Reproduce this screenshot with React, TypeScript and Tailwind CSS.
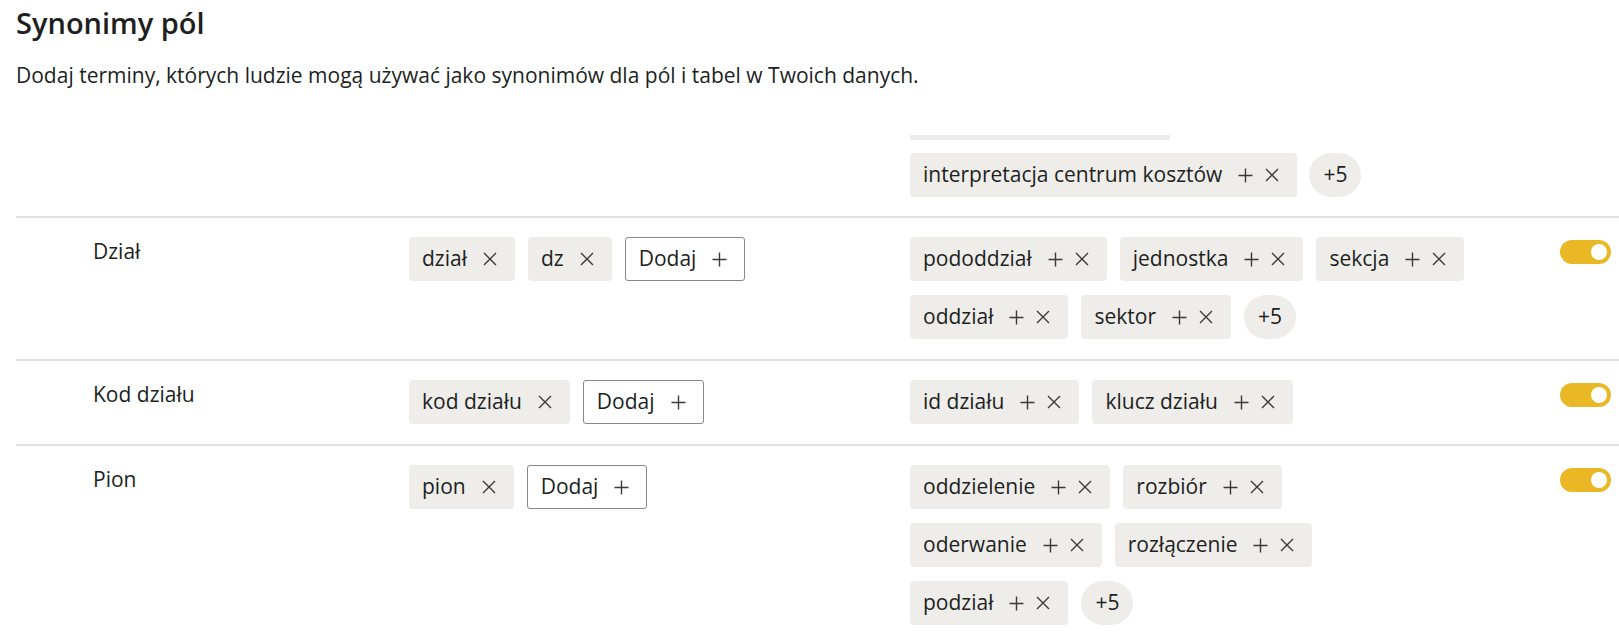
import React from "react";

const FONT = { fontFamily: '"Open Sans", "Noto Sans", sans-serif' };

function XIcon() {
  return (
    <svg width="14" height="14" viewBox="0 0 14 14" className="shrink-0">
      <path d="M1 1 L13 13 M13 1 L1 13" stroke="#3b3a39" strokeWidth="1.4" fill="none" />
    </svg>
  );
}

function PlusIcon() {
  return (
    <svg width="15" height="15" viewBox="0 0 15 15" className="shrink-0">
      <path d="M7.5 0.5 L7.5 14.5 M0.5 7.5 L14.5 7.5" stroke="#3b3a39" strokeWidth="1.4" fill="none" />
    </svg>
  );
}

function Chip({ label, plus = false }: { label: string; plus?: boolean }) {
  return (
    <div className="flex h-[44px] shrink-0 items-center gap-[16px] rounded-[4px] bg-[#efedea] pl-[13px] pr-[18px] text-[21px] text-[#201f1e]">
      <span className="whitespace-nowrap">{label}</span>
      <div className="flex items-center gap-[12px]">
        {plus && <PlusIcon />}
        <XIcon />
      </div>
    </div>
  );
}

function More() {
  return (
    <div className="flex h-[44px] w-[52px] shrink-0 items-center justify-center rounded-full bg-[#efedea] text-[21px] text-[#201f1e]">
      +5
    </div>
  );
}

function AddButton() {
  return (
    <div className="flex h-[44px] shrink-0 items-center gap-[16px] rounded-[3px] border border-[#8a8886] bg-white pl-[13px] pr-[17px] text-[21px] text-[#201f1e]">
      <span>Dodaj</span>
      <PlusIcon />
    </div>
  );
}

function Toggle() {
  return (
    <div className="mt-[3px] flex h-[24px] w-[51px] items-center justify-end rounded-full bg-[#e9b824] pr-[4px]">
      <div className="h-[16px] w-[16px] rounded-full bg-white" />
    </div>
  );
}

function Divider() {
  return <div className="h-[2px] bg-[#e3e1df]" />;
}

type Row = {
  label: string;
  mine: string[];
  suggestions: string[][];
};

const rows: Row[] = [
  {
    label: "Dział",
    mine: ["dział", "dz"],
    suggestions: [["pododdział", "jednostka", "sekcja"], ["oddział", "sektor", "+5"]],
  },
  {
    label: "Kod działu",
    mine: ["kod działu"],
    suggestions: [["id działu", "klucz działu"]],
  },
  {
    label: "Pion",
    mine: ["pion"],
    suggestions: [["oddzielenie", "rozbiór"], ["oderwanie", "rozłączenie"], ["podział", "+5"]],
  },
];

function SuggestionLines({ lines }: { lines: string[][] }) {
  return (
    <div className="flex flex-col gap-[14px]">
      {lines.map((line, i) => (
        <div key={i} className="flex items-center gap-[13px]">
          {line.map((s) => (s === "+5" ? <More key={s} /> : <Chip key={s} label={s} plus />))}
        </div>
      ))}
    </div>
  );
}

export default function App() {
  return (
    <div className="min-h-[640px] bg-white pl-[16px] pt-[5px] text-[#201f1e]" style={FONT}>
      <h1 className="text-[29px] font-semibold leading-[36px]">Synonimy pól</h1>
      <p className="mt-[20px] text-[21px] leading-[28px]">
        Dodaj terminy, których ludzie mogą używać jako synonimów dla pól i tabel w Twoich danych.
      </p>

      <div className="mt-[46px] grid grid-cols-[393px_501px_1fr_auto] pb-[19px]">
        <div />
        <div />
        <div className="flex flex-col">
          <div className="h-[5px] w-[260px] bg-[#ecebe8]" />
          <div className="mt-[13px] flex items-center gap-[12px]">
            <Chip label="interpretacja centrum kosztów" plus />
            <More />
          </div>
        </div>
        <div />
      </div>

      {rows.map((r) => (
        <div key={r.label}>
          <Divider />
          <div className="grid grid-cols-[393px_501px_1fr_auto] items-start pb-[20px] pt-[19px]">
            <div className="pl-[77px] text-[21px] leading-[28px]">{r.label}</div>
            <div className="flex items-center gap-[13px]">
              {r.mine.map((m) => (
                <Chip key={m} label={m} />
              ))}
              <AddButton />
            </div>
            <SuggestionLines lines={r.suggestions} />
            <div className="pr-[8px]">
              <Toggle />
            </div>
          </div>
        </div>
      ))}
    </div>
  );
}
